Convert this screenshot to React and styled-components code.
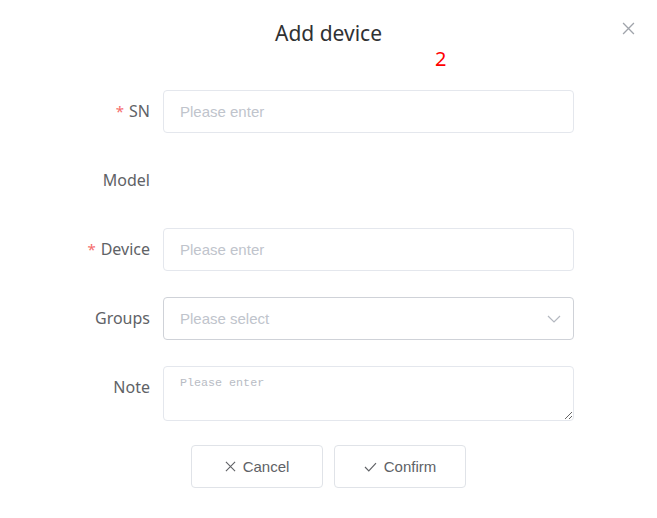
import styled, { createGlobalStyle } from "styled-components"

const GlobalStyle = createGlobalStyle`
  html, body {
    margin: 0;
    padding: 0;
    background: #fff;
  }
`

const Dialog = styled.div`
  position: relative;
  width: 657px;
  height: 518px;
  box-sizing: border-box;
  background: #fff;
  font-family: "Liberation Sans", Arial, sans-serif;
`
const Header = styled.div`
  position: relative;
  height: 66px;
  display: flex;
  justify-content: center;
  padding-top: 18px;
  box-sizing: border-box;
`
const Title = styled.h2`
  margin: 0;
  font-family: "Noto Sans", sans-serif;
  font-weight: 400;
  font-size: 21px;
  line-height: 30px;
  color: #303133;
`
const Badge = styled.span`
  position: absolute;
  left: 435px;
  top: 45px;
  font-family: "Noto Sans", sans-serif;
  font-size: 20px;
  line-height: 28px;
  color: #ff0000;
`
const Close = styled.button`
  position: absolute;
  right: 22px;
  top: 21px;
  width: 14px;
  height: 14px;
  padding: 0;
  border: none;
  background: none;
  color: #909399;
  display: flex;
  align-items: center;
  justify-content: center;
`
const Form = styled.div`
  display: grid;
  grid-template-columns: 163px 411px;
  row-gap: 26px;
  margin-top: 24px;
`
const Label = styled.label`
  display: flex;
  align-items: center;
  justify-content: flex-end;
  padding-right: 13px;
  height: 43px;
  font-family: "Noto Sans", sans-serif;
  font-size: 16px;
  color: #606266;
  align-self: ${(p) => (p.top ? "start" : "center")};
  margin-top: ${(p) => (p.top ? "-1px" : "-1px")};
`
const Star = styled.span`
  color: #f56c6c;
  font-size: 15px;
  margin-right: 5px;
`
const Input = styled.input`
  box-sizing: border-box;
  width: 100%;
  height: 43px;
  padding: 0 16px;
  border: 1px solid #e4e7ed;
  border-radius: 4px;
  font-family: "Liberation Sans", Arial, sans-serif;
  font-size: 15px;
  color: #606266;
  outline: none;
  &::placeholder {
    color: #c0c4cc;
  }
`
const Empty = styled.div`
  height: 43px;
`
const SelectBox = styled.div`
  box-sizing: border-box;
  height: 43px;
  padding: 0 12px 0 16px;
  border: 1px solid #cfd2d8;
  border-radius: 4px;
  display: flex;
  align-items: center;
  justify-content: space-between;
  font-size: 15px;
  color: #c0c4cc;
`
const TextArea = styled.textarea`
  box-sizing: border-box;
  display: block;
  width: 100%;
  height: 55px;
  padding: 9px 16px;
  border: 1px solid #e4e7ed;
  border-radius: 4px;
  font-family: "Liberation Mono", monospace;
  font-size: 11.7px;
  outline: none;
  &::placeholder {
    color: #b8bcc4;
  }
`
const Footer = styled.div`
  display: flex;
  justify-content: center;
  gap: 11px;
  margin-top: 24px;
`
const Button = styled.button`
  width: 132px;
  height: 43px;
  box-sizing: border-box;
  border: 1px solid #e0e3e8;
  border-radius: 4px;
  background: #fff;
  display: flex;
  align-items: center;
  justify-content: center;
  gap: 7px;
  font-family: "Liberation Sans", Arial, sans-serif;
  font-size: 15px;
  color: #606266;
`

const XIcon = ({ size = 12, color = "currentColor" }) => (
  <svg width={size} height={size} viewBox="0 0 12 12" fill="none" stroke={color} strokeWidth="1.2">
    <path d="M1 1L11 11M11 1L1 11" />
  </svg>
)

const CheckIcon = () => (
  <svg width="13" height="10" viewBox="0 0 13 10" fill="none" stroke="currentColor" strokeWidth="1.2">
    <path d="M1 5L4.8 8.8L12 1.2" />
  </svg>
)

const ChevronIcon = () => (
  <svg width="14" height="8" viewBox="0 0 14 8" fill="none" stroke="#b4b8c0" strokeWidth="1.2">
    <path d="M1 1L7 7L13 1" />
  </svg>
)

const App = () => {
  return (
    <Dialog>
      <GlobalStyle />
      <Header>
        <Title>Add device</Title>
        <Badge>2</Badge>
        <Close>
          <XIcon size={13} color="#a0a4ab" />
        </Close>
      </Header>
      <Form>
        <Label><Star>*</Star>SN</Label>
        <Input placeholder="Please enter" />
        <Label>Model</Label>
        <Empty />
        <Label><Star>*</Star>Device</Label>
        <Input placeholder="Please enter" />
        <Label>Groups</Label>
        <SelectBox>
          <span>Please select</span>
          <ChevronIcon />
        </SelectBox>
        <Label top>Note</Label>
        <TextArea placeholder="Please enter" />
      </Form>
      <Footer>
        <Button><XIcon size={11} />Cancel</Button>
        <Button><CheckIcon />Confirm</Button>
      </Footer>
    </Dialog>
  )
}

export default App
